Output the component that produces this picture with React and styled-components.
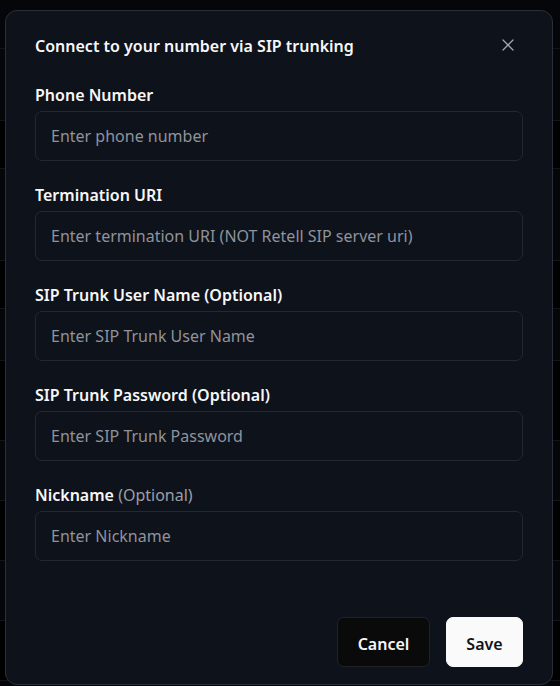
import React from 'react';
import styled, { createGlobalStyle } from 'styled-components';
import { X } from 'lucide-react';

const GlobalStyle = createGlobalStyle`
  html, body {
    margin: 0;
    padding: 0;
    background: #090a0e;
  }
  body {
    font-family: "Noto Sans", "Open Sans", sans-serif;
    color: #f4f5f7;
  }
  * {
    box-sizing: border-box;
  }
`;

const Page = styled.div`
  position: relative;
  width: 560px;
  height: 686px;
  overflow: hidden;
  background: #090a0e;
`;

const BackTable = styled.div`
  display: flex;
  flex-direction: column;
  padding-top: 48px;
`;

const BackRow = styled.div`
  height: ${(p) => p.h}px;
  border-top: 1px solid #1c1f27;
  background: ${(p) => (p.dark ? '#000000' : 'transparent')};
`;

const Overlay = styled.div`
  position: absolute;
  inset: 0;
  background: rgba(0, 0, 0, 0.35);
`;

const Dialog = styled.div`
  position: absolute;
  left: 5px;
  top: 10px;
  width: 548px;
  height: 675px;
  background: #0e121a;
  border: 1px solid #2a2f3a;
  border-radius: 12px;
  padding: 23px 29px 17px;
  display: flex;
  flex-direction: column;
`;

const Header = styled.div`
  display: flex;
  align-items: center;
  justify-content: space-between;
  height: 24px;
`;

const Title = styled.h2`
  margin: 0;
  font-size: 16px;
  font-weight: 600;
  line-height: 24px;
  color: #f6f7f9;
`;

const CloseButton = styled.button`
  display: flex;
  align-items: center;
  justify-content: center;
  width: 22px;
  height: 22px;
  margin-right: 4px;
  margin-top: -2px;
  padding: 0;
  border: none;
  background: transparent;
  color: #a3a8b3;
  cursor: pointer;
`;

const Form = styled.div`
  display: flex;
  flex-direction: column;
  gap: 22px;
  margin-top: 25px;
`;

const Field = styled.div`
  display: flex;
  flex-direction: column;
  gap: 4px;
`;

const Label = styled.label`
  font-size: 16px;
  font-weight: 600;
  line-height: 24px;
  color: #f6f7f9;
`;

const Hint = styled.span`
  font-weight: 400;
  color: #9a9fa9;
`;

const Input = styled.input`
  height: 50px;
  width: 100%;
  padding: 0 15px;
  border: 1px solid #242832;
  border-radius: 7px;
  background: #0e121a;
  font-family: inherit;
  font-size: 16px;
  color: #f6f7f9;
  outline: none;

  &::placeholder {
    color: #8e939d;
  }
`;

const Footer = styled.div`
  margin-top: auto;
  display: flex;
  justify-content: flex-end;
  gap: 16px;
`;

const Button = styled.button`
  height: 50px;
  width: ${(p) => p.w}px;
  padding: 3px 0 0;
  border-radius: 7px;
  border: 1px solid ${(p) => (p.primary ? '#fafafa' : '#1f2228')};
  background: ${(p) => (p.primary ? '#fafafa' : '#0a0a0a')};
  color: ${(p) => (p.primary ? '#111318' : '#f6f7f9')};
  font-family: inherit;
  font-size: 16px;
  font-weight: 600;
  cursor: pointer;
`;

const fields = [
  { label: 'Phone Number', placeholder: 'Enter phone number' },
  {
    label: 'Termination URI',
    placeholder: 'Enter termination URI (NOT Retell SIP server uri)',
  },
  {
    label: 'SIP Trunk User Name (Optional)',
    placeholder: 'Enter SIP Trunk User Name',
  },
  {
    label: 'SIP Trunk Password (Optional)',
    placeholder: 'Enter SIP Trunk Password',
  },
  { label: 'Nickname', hint: '(Optional)', placeholder: 'Enter Nickname' },
];

const backRows = [72, 48, 92, 48, 52, 80, 60, 60, 60, 60, 60];

const App = () => (
  <>
    <GlobalStyle />
    <Page>
      <BackTable>
        {backRows.map((h, i) => (
          <BackRow key={i} h={h} dark={i % 2 === 1} />
        ))}
      </BackTable>
      <Overlay>
        <Dialog role="dialog">
          <Header>
            <Title>Connect to your number via SIP trunking</Title>
            <CloseButton aria-label="Close">
              <X size={20} strokeWidth={1.5} />
            </CloseButton>
          </Header>
          <Form>
            {fields.map((f) => (
              <Field key={f.label}>
                <Label>
                  {f.label}
                  {f.hint && <Hint> {f.hint}</Hint>}
                </Label>
                <Input placeholder={f.placeholder} />
              </Field>
            ))}
          </Form>
          <Footer>
            <Button w={93}>Cancel</Button>
            <Button w={77} primary>
              Save
            </Button>
          </Footer>
        </Dialog>
      </Overlay>
    </Page>
  </>
);

export default App;
